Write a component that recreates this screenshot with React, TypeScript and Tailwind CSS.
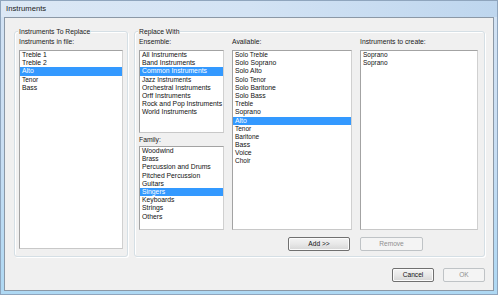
import React from "react";

const F = "font-['Liberation_Sans',Arial,sans-serif]";

type Item = { t: string; s?: boolean };

function ListBox({ items, selected, className }: { items: Item[]; selected?: number; className: string }) {
  return (
    <div
      className={`bg-white border border-[#a3a3a3] border-r-[#d0d0d0] border-b-[#c8c8c8] overflow-hidden ${className}`}
    >
      {items.map((it, i) => (
        <div
          key={i}
          className={`h-[8.2px] leading-[8.2px] pl-[2px] whitespace-nowrap ${
            i === selected ? "bg-[#3399ff] text-white" : "text-[#111111]"
          } ${it.s ? "text-[6.5px]" : "text-[6.8px]"}`}
        >
          {it.t}
        </div>
      ))}
    </div>
  );
}

function Group({ label, className, children }: { label: string; className: string; children: React.ReactNode }) {
  return (
    <div
      className={`relative border border-[#d5dfe5] rounded-[3px] shadow-[inset_1px_1px_0_#ffffff,1px_1px_0_#ffffff] ${className}`}
    >
      <span className="absolute left-[3px] top-[-5.5px] bg-[#f0f0f0] px-[1px] leading-[9px] text-[6.8px] text-[#1a1a1a] whitespace-nowrap">
        {label}
      </span>
      {children}
    </div>
  );
}

function Label({ children, className = "" }: { children: React.ReactNode; className?: string }) {
  return <div className={`leading-[9px] text-[6.8px] text-[#1a1a1a] whitespace-nowrap ${className}`}>{children}</div>;
}

function Btn({ children, disabled, className }: { children: React.ReactNode; disabled?: boolean; className: string }) {
  return (
    <div
      className={`flex items-center justify-center rounded-[2px] text-[6.6px] leading-none ${
        disabled
          ? "border border-[#bfc3c6] bg-[#f4f4f4] text-[#8f8f8f]"
          : "border border-[#707070] bg-gradient-to-b from-[#f4f4f4] via-[#e8e8e8] to-[#d6d6d6] text-[#111] shadow-[inset_0_0_0_1px_#fbfbfb]"
      } ${className}`}
    >
      {children}
    </div>
  );
}

export default function App() {
  const inFile: Item[] = [{ t: "Treble 1" }, { t: "Treble 2" }, { t: "Alto" }, { t: "Tenor", s: true }, { t: "Bass" }];
  const ensemble: Item[] = [
    { t: "All Instruments" },
    { t: "Band Instruments" },
    { t: "Common Instruments" },
    { t: "Jazz Instruments", s: true },
    { t: "Orchestral Instruments" },
    { t: "Orff Instruments" },
    { t: "Rock and Pop Instruments" },
    { t: "World Instruments" },
  ];
  const family: Item[] = [
    { t: "Woodwind" },
    { t: "Brass", s: true },
    { t: "Percussion and Drums" },
    { t: "Pitched Percussion" },
    { t: "Guitars" },
    { t: "Singers" },
    { t: "Keyboards" },
    { t: "Strings" },
    { t: "Others" },
  ];
  const available: Item[] = [
    { t: "Solo Treble", s: true },
    { t: "Solo Soprano" },
    { t: "Solo Alto" },
    { t: "Solo Tenor", s: true },
    { t: "Solo Baritone" },
    { t: "Solo Bass" },
    { t: "Treble", s: true },
    { t: "Soprano" },
    { t: "Alto" },
    { t: "Tenor", s: true },
    { t: "Baritone", s: true },
    { t: "Bass" },
    { t: "Voice" },
    { t: "Choir", s: true },
  ];
  const create: Item[] = [{ t: "Soprano", s: true }, { t: "Soprano", s: true }];

  return (
    <div
      className={`${F} w-[498px] h-[295px] flex flex-col bg-gradient-to-b from-[#d3e3f4] via-[#c9def3] to-[#aed8f3] border border-[#8fa5bd] overflow-hidden`}
    >
      <div className="h-[16px] flex items-center pl-[5px] text-[7.7px] text-[#1b1b1b] bg-gradient-to-r from-[#dce8f5] via-[#d3e3f4] to-[#bed6ee]">
        Instruments
      </div>
      <div className="mx-[3px] h-[274px] border border-[#8b98a6] bg-[#f0f0f0] flex flex-col pt-[13px]">
        <div className="flex pl-[9px] gap-[6px]">
          <Group label="Instruments To Replace" className="w-[114px] h-[226px] pt-[5px] pl-[4px]">
            <Label className="mb-[4px]">Instruments in file:</Label>
            <ListBox items={inFile} selected={2} className="w-[104px] h-[199px]" />
          </Group>
          <Group label="Replace With" className="w-[351px] h-[226px] pt-[5px] pl-[4px]">
            <div className="flex gap-[8px]">
              <div className="flex flex-col w-[85px]">
                <Label className="mb-[4px]">Ensemble:</Label>
                <ListBox items={ensemble} selected={2} className="h-[83px]" />
                <Label className="mt-[2px] mb-[2px]">Family:</Label>
                <ListBox items={family} selected={5} className="h-[84px]" />
              </div>
              <div className="flex flex-col w-[120px]">
                <Label className="mb-[4px]">Available:</Label>
                <ListBox items={available} selected={8} className="h-[180px]" />
                <div className="flex justify-end pr-[2px] mt-[7px]">
                  <Btn className="w-[62px] h-[14px]">Add &gt;&gt;</Btn>
                </div>
              </div>
              <div className="flex flex-col w-[118px]">
                <Label className="mb-[4px]">Instruments to create:</Label>
                <ListBox items={create} className="h-[180px]" />
                <div className="flex mt-[7px]">
                  <Btn disabled className="w-[63px] h-[14px]">Remove</Btn>
                </div>
              </div>
            </div>
          </Group>
        </div>
        <div className="flex justify-end gap-[9px] pr-[8px] mt-[11px]">
          <Btn className="w-[42px] h-[14px]">Cancel</Btn>
          <Btn disabled className="w-[42px] h-[14px]">OK</Btn>
        </div>
      </div>
    </div>
  );
}
